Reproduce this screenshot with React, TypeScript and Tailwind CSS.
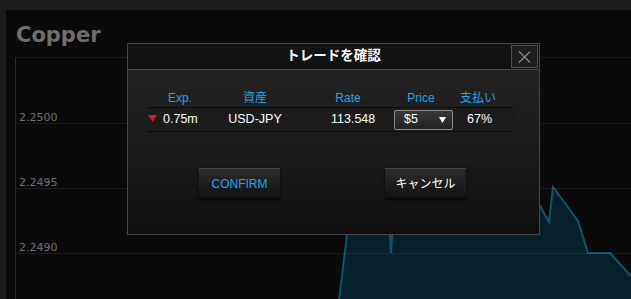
import React from "react";

const sans = { fontFamily: '"Liberation Sans", Arial, "Noto Sans CJK JP", sans-serif' };

function Chart() {
  const line = "339,300 347,235 352,200 389,220 391,253 393,220 530,188 549,222 553,187 578,221 588,253 610,253 631,276";
  return (
    <svg className="absolute left-0 top-0" width="631" height="299" viewBox="0 0 631 299">
      <polygon points={`${line} 631,300`} fill="#06212a" />
      <polyline points={line} fill="none" stroke="#0c566a" strokeWidth="2" strokeLinejoin="miter" />
      {[57, 123, 188, 253].map((y) => (
        <line key={y} x1="15" x2="631" y1={y + 0.5} y2={y + 0.5} stroke="rgba(255,255,255,0.07)" strokeWidth="1" />
      ))}
      <line x1="15.5" x2="15.5" y1="57" y2="299" stroke="#2e2e2e" strokeWidth="1" />
      <g fill="#717171" fontSize="11" style={{ fontFamily: '"DejaVu Sans", sans-serif' }}>
        <text x="19" y="121">2.2500</text>
        <text x="19" y="186">2.2495</text>
        <text x="19" y="251">2.2490</text>
      </g>
    </svg>
  );
}

function Btn({ children, blue }: { children: React.ReactNode; blue?: boolean }) {
  return (
    <div
      className={`w-[81px] h-[30px] flex items-center justify-center text-[12px] border-t border-[#454545] bg-gradient-to-b from-[#2c2c2c] to-[#111111] shadow-[0_2px_2px_rgba(0,0,0,0.7)] ${blue ? "text-[#1ca4ef]" : "text-white"}`}
      style={sans}
    >
      {children}
    </div>
  );
}

export default function App() {
  const blue = "text-[#1ca4ef]";
  return (
    <div className="relative w-[631px] h-[299px] overflow-hidden bg-[#1b1b1b] pt-[10px] pl-[6px]" style={sans}>
      <div className="relative h-[289px] bg-[#0a0a0a] pl-[10px] pt-[13px]">
        <div className="text-[21px] leading-[24px] font-bold text-[#6e6e6e]" style={{ fontFamily: '"DejaVu Sans", sans-serif' }}>
          Copper
        </div>
      </div>
      <Chart />

      <div className="absolute left-[127px] top-[43px] w-[413px] h-[192px] border border-[#474747] flex flex-col bg-gradient-to-b from-[#262626] to-[#101010]">
        <div className="relative h-[26px] shrink-0 bg-[#121212] border-b border-[#474747] flex items-center justify-center">
          <span className="text-white font-bold text-[13.5px]" style={sans}>トレードを確認</span>
          <div className="absolute right-[1px] top-[1px] w-[27px] h-[23px] border border-[#4e4e4e] bg-[#1e1e1e] flex items-center justify-center">
            <svg width="13" height="12" viewBox="0 0 13 12">
              <path d="M1 0.5 L12 11.5 M12 0.5 L1 11.5" stroke="#8a8a8a" strokeWidth="1.3" fill="none" />
            </svg>
          </div>
        </div>

        <div className="pl-[19px] pt-[18px]">
          <div className={`w-[366px] h-[20px] flex items-center border-b border-[#0b0b0b] text-[12px] ${blue}`}>
            <div className="w-[66px] text-center">Exp.</div>
            <div className="w-[84px] text-center">資産</div>
            <div className="w-[102px] text-center">Rate</div>
            <div className="w-[44px] text-center">Price</div>
            <div className="w-[70px] text-center">支払い</div>
          </div>
          <div className="w-[366px] h-[24px] flex items-center border-b border-[#0b0b0b] bg-[#1c1c1c] text-white text-[12.5px]">
            <div className="w-[66px] flex items-center pl-[1px]">
              <svg width="9" height="7" viewBox="0 0 9 7" className="mb-[3px]">
                <polygon points="0,0 9,0 4.5,7" fill="#e0141e" />
              </svg>
              <span className="ml-[6px]">0.75m</span>
            </div>
            <div className="w-[84px] text-center">USD-JPY</div>
            <div className="w-[97px] pl-[34px]">113.548</div>
            <div className="w-[59px] h-[20px] border border-[#8c8c8c] rounded-[2px] bg-gradient-to-b from-[#383838] to-[#232323] flex items-center justify-between pl-[9px] pr-[6px]">
              <span>$5</span>
              <svg width="7" height="6" viewBox="0 0 7 6">
                <polygon points="0,0 7,0 3.5,6" fill="#ffffff" />
              </svg>
            </div>
            <div className="ml-[14px]">67%</div>
          </div>

          <div className="mt-[36px] flex pl-[52px]">
            <Btn blue>CONFIRM</Btn>
            <div className="w-[105px]" />
            <Btn>キャンセル</Btn>
          </div>
        </div>
      </div>
    </div>
  );
}
